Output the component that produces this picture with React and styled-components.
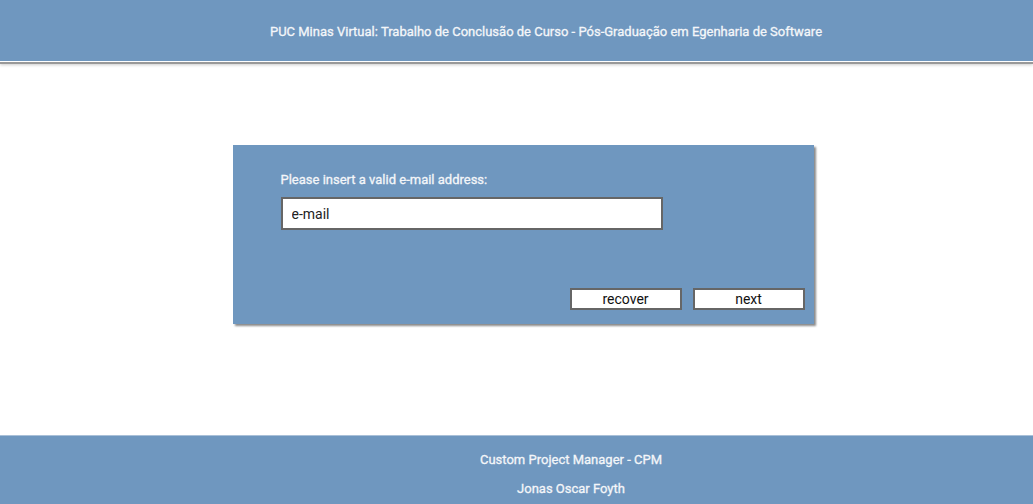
import React from "react";
import styled, { createGlobalStyle } from "styled-components";

const Global = createGlobalStyle`
  html, body { margin: 0; padding: 0; background: #fff; }
  body { font-family: Roboto, "Liberation Sans", Arial, sans-serif; }
  * { box-sizing: border-box; }
`;

const BLUE = "#6f97bf";
const LIGHT = "#f4f6f9";

const Page = styled.div`
  width: 1033px;
  height: 504px;
  display: flex;
  flex-direction: column;
  overflow: hidden;
`;

const Header = styled.header`
  height: 62px;
  background: ${BLUE};
  display: flex;
  align-items: center;
  justify-content: center;
  color: ${LIGHT};
  font-size: 13px;
  -webkit-text-stroke: 0.3px ${LIGHT};
  padding-left: 59px;
  padding-top: 2px;
  border-bottom: 1px solid #fff;
  box-shadow: 0 2px 0 #999, 0 3px 3px #ccc;
  flex-shrink: 0;
`;

const Main = styled.main`
  flex: 1;
  display: flex;
  justify-content: center;
  padding-top: 83px;
  padding-left: 13px;
`;

const Card = styled.section`
  width: 581px;
  height: 179px;
  background: ${BLUE};
  box-shadow: 2px 2px 2px #8a8a8a;
  padding: 27px 9px 14px 48px;
  display: flex;
  flex-direction: column;
`;

const Label = styled.label`
  color: ${LIGHT};
  font-size: 13px;
  -webkit-text-stroke: 0.3px ${LIGHT};
  line-height: 15px;
  margin-bottom: 10px;
`;

const Input = styled.input`
  width: 382px;
  height: 33px;
  border: 2px solid #666;
  background: #fff;
  font-family: Roboto, "Liberation Sans", Arial, sans-serif;
  font-size: 14px;
  color: #222;
  padding: 0 9px;
  outline: none;
  &::placeholder { color: #222; }
`;

const Actions = styled.div`
  margin-top: auto;
  display: flex;
  justify-content: flex-end;
  gap: 11px;
`;

const Button = styled.button`
  width: 112px;
  height: 22px;
  border: 2px solid #666;
  background: #fff;
  font-family: Roboto, "Liberation Sans", Arial, sans-serif;
  font-size: 14px;
  color: #111;
  padding: 0;
  line-height: 18px;
`;

const Footer = styled.footer`
  height: 69px;
  background: ${BLUE};
  border-top: 1px solid #a9c0d8;
  display: flex;
  flex-direction: column;
  align-items: center;
  justify-content: center;
  gap: 14px;
  color: ${LIGHT};
  font-size: 13px;
  -webkit-text-stroke: 0.3px ${LIGHT};
  padding-left: 109px;
  padding-top: 8px;
  flex-shrink: 0;
`;

export default function App() {
  return (
    <Page>
      <Global />
      <Header>PUC Minas Virtual: Trabalho de Conclusão de Curso - Pós-Graduação em Egenharia de Software</Header>
      <Main>
        <Card>
          <Label>Please insert a valid e-mail address:</Label>
          <Input placeholder="e-mail" />
          <Actions>
            <Button>recover</Button>
            <Button>next</Button>
          </Actions>
        </Card>
      </Main>
      <Footer>
        <div>Custom Project Manager - CPM</div>
        <div>Jonas Oscar Foyth</div>
      </Footer>
    </Page>
  );
}
